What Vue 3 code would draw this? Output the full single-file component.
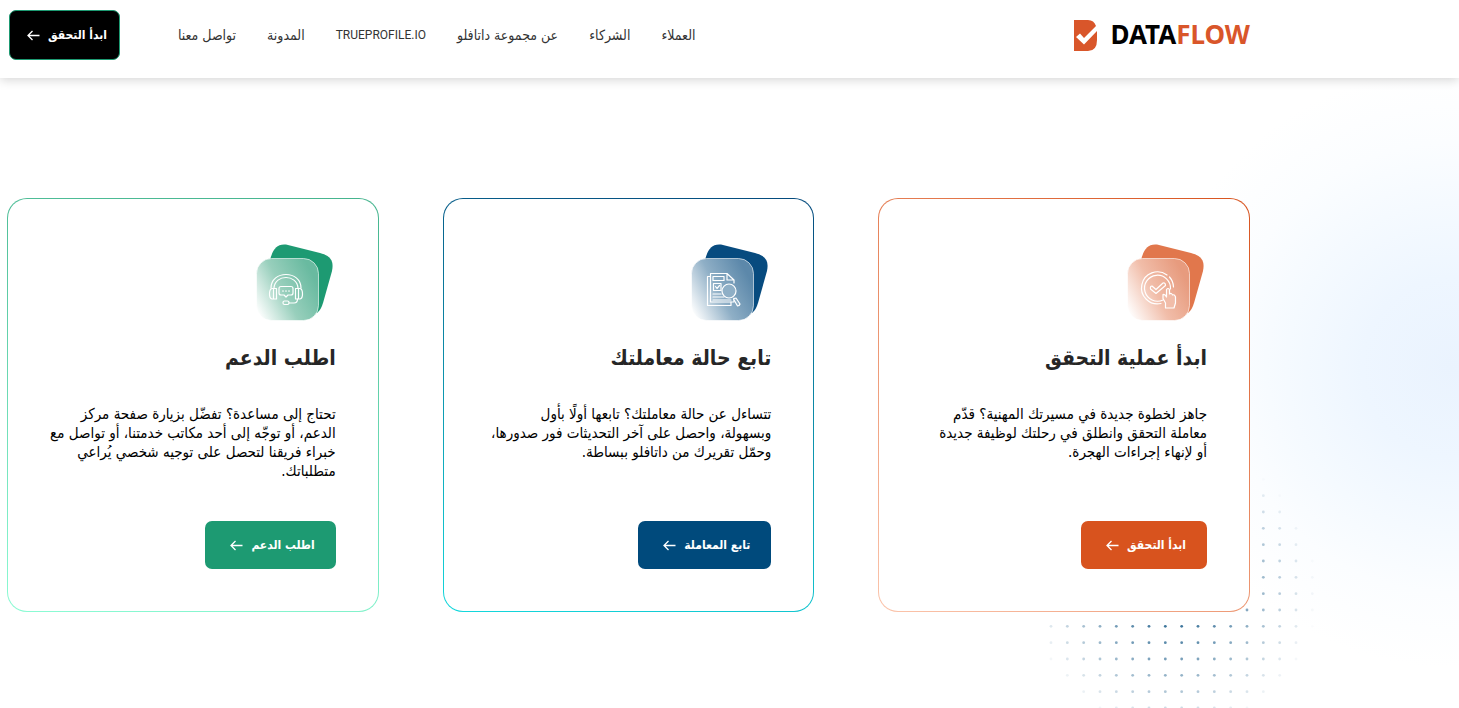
<script setup>
const navItems = [
  { text: 'العملاء' },
  { text: 'الشركاء' },
  { text: 'عن مجموعة داتافلو' },
  { text: 'TRUEPROFILE.IO', latin: true },
  { text: 'المدونة' },
  { text: 'تواصل معنا' },
]

const cards = [
  {
    id: 'verify',
    title: 'ابدأ عملية التحقق',
    lines: [
      'جاهز لخطوة جديدة في مسيرتك المهنية؟ قدّم',
      'معاملة التحقق وانطلق في رحلتك لوظيفة جديدة',
      'أو لإنهاء إجراءات الهجرة.',
    ],
    action: 'ابدأ التحقق',
    back: '#e1774c',
    glass: ['#e79b7e', '#f1bda9', '#ffffff'],
  },
  {
    id: 'track',
    title: 'تابع حالة معاملتك',
    lines: [
      'تتساءل عن حالة معاملتك؟ تابعها أولًا بأول',
      'وبسهولة، واحصل على آخر التحديثات فور صدورها،',
      'وحمّل تقريرك من داتافلو ببساطة.',
    ],
    action: 'تابع المعاملة',
    back: '#074b7f',
    glass: ['#5c88aa', '#8fafc6', '#ffffff'],
  },
  {
    id: 'support',
    title: 'اطلب الدعم',
    lines: [
      'تحتاج إلى مساعدة؟ تفضّل بزيارة صفحة مركز',
      'الدعم، أو توجّه إلى أحد مكاتب خدمتنا، أو تواصل مع',
      'خبراء فريقنا لتحصل على توجيه شخصي يُراعي',
      'متطلباتك.',
    ],
    action: 'اطلب الدعم',
    back: '#1d9a72',
    glass: ['#69baa0', '#98cfbc', '#ffffff'],
  },
]

const step = 49 / 3
const dots = []
for (let row = 0; row < 17; row++) {
  for (let col = 0; col < 17; col++) {
    const x = 2 + col * step
    const y = 2 + row * step
    const fade = 1 - Math.hypot(x - 124, y - 130) / 146
    if (fade > 0) dots.push({ x, y, fade })
  }
}
</script>

<template>
  <div class="page" dir="rtl" lang="ar">
    <header class="bar">
      <a class="logo" href="#" dir="ltr" aria-label="DATAFLOW">
        <svg class="mark" viewBox="0 0 23 31" aria-hidden="true">
          <path d="M0 0H14Q20 0 22 6L10 18L6 13.5L2 17L10 24.5L23 11V20Q23 31 14 31H0Z" fill="#d9562a" />
        </svg>
        <span class="word">DATA<span class="accent">FLOW</span></span>
      </a>
      <nav class="nav">
        <a v-for="item in navItems" :key="item.text" href="#" :class="{ latin: item.latin }">{{ item.text }}</a>
      </nav>
      <button class="start" type="button">
        ابدأ التحقق
        <svg class="arrow" viewBox="0 0 13 11" aria-hidden="true"><path d="M12.5 5.5H1M5.5 1L1 5.5L5.5 10" /></svg>
      </button>
    </header>

    <main class="main">
      <div class="glow"></div>
      <svg class="dots" viewBox="0 0 270 270" aria-hidden="true">
        <circle v-for="(d, i) in dots" :key="i" :cx="d.x" :cy="d.y" r="1.4" :opacity="d.fade" fill="#004a7c" />
      </svg>

      <section class="cards">
        <article v-for="card in cards" :key="card.id" class="card" :class="card.id">
          <svg class="icon" viewBox="0 0 80 80" aria-hidden="true">
            <defs>
              <linearGradient :id="'glass-' + card.id" x1="0.95" y1="0.35" x2="0" y2="0.85">
                <stop offset="0" :stop-color="card.glass[0]" />
                <stop offset="0.5" :stop-color="card.glass[1]" />
                <stop offset="1" :stop-color="card.glass[2]" />
              </linearGradient>
            </defs>
            <path d="M14 17C17 6 21 0 32 2L64 10C75 13 78 18 76 28L67 60Q65 67 61 70L20 60Z" :fill="card.back" />
            <rect x="0.5" y="15.5" width="62" height="62" rx="15" :fill="`url(#glass-${card.id})`" stroke="#fff" stroke-opacity="0.6" />
            <g v-if="card.id === 'verify'" class="line">
              <path d="M40 32A16 16 0 1 0 34 60.5" />
              <path d="M42.5 34A16 16 0 0 1 46.5 44" />
              <path d="M36 57A13 13 0 1 1 43.5 46" />
              <path d="M25 43L29 46.5L36 40Q38.5 39.5 38.5 42.5L29 50.5L23.5 46Q23 43 25 43Z" />
              <path :fill="card.glass[1]" d="M38.5 65V60L36 55.5V51.5Q38 51 39.5 54V46.5Q41 44.5 42.5 46.5V51Q44.5 49.5 45.5 52Q47.5 51 48.5 54V60L47 65Z" />
            </g>
            <g v-else-if="card.id === 'track'" class="line">
              <path d="M19.5 33.5H16.5V62.5H40V59" />
              <path d="M43 40V37L36 30.5H19.5V59H43V55M36 30.5V37H43" />
              <path d="M22 33.5H33V37.5H22ZM22.5 40.5H30V47.5H22.5ZM24.5 43.5L26 45.5L28.5 42.5" />
              <path d="M22 51H30M22 54H33M22 57H40" />
              <circle cx="38" cy="48" r="7" :fill="card.glass[1]" />
              <path :fill="card.glass[1]" d="M42.5 56L45 55L49 61Q48.5 63 46.5 63Z" />
            </g>
            <g v-else class="line">
              <path d="M15 45C15 27 45 27 45 45M18 45C19 31 41 31 42 45" />
              <path d="M20.5 45.5H16Q13.5 46 13.5 51Q13.5 55.5 16 56H20.5ZM17.5 45.5V56" />
              <path d="M39.5 45.5H44Q46.5 46 46.5 51Q46.5 55.5 44 56H39.5ZM42.5 45.5V56" />
              <path d="M25 43.5H35Q37 43.5 37 45.5V50Q37 52 35 52H32L30 54L28 52H25Q23 52 23 50V45.5Q23 43.5 25 43.5Z" />
              <path d="M26.5 48H27.5M29.5 48H30.5M32.5 48H33.5" />
              <rect x="27" y="58" width="6" height="3.5" rx="1.5" />
              <path d="M33 60H38Q41.5 60 41.5 56" />
            </g>
          </svg>
          <h2>{{ card.title }}</h2>
          <p>
            <template v-for="(line, i) in card.lines" :key="i"><br v-if="i" />{{ line }}</template>
          </p>
          <button class="action" type="button">
            {{ card.action }}
            <svg class="arrow" viewBox="0 0 13 11" aria-hidden="true"><path d="M12.5 5.5H1M5.5 1L1 5.5L5.5 10" /></svg>
          </button>
        </article>
      </section>
    </main>
  </div>
</template>

<style>
body {
  margin: 0;
  background: #fff;
}
</style>

<style scoped>
.page {
  min-height: 100vh;
  display: flex;
  flex-direction: column;
  overflow: hidden;
  font-family: "DejaVu Sans Condensed", "DejaVu Sans", sans-serif;
  color: #000;
}

.bar {
  position: relative;
  z-index: 1;
  display: flex;
  align-items: center;
  box-sizing: border-box;
  min-height: 78px;
  padding: 0 209px 8px 9px;
  background: #fff;
  box-shadow: 0 2px 10px rgba(0, 0, 0, 0.17);
}

.logo {
  display: flex;
  align-items: center;
  gap: 13px;
  margin-left: auto;
  text-decoration: none;
}

.mark {
  width: 23px;
  height: 31px;
}

.word {
  padding-bottom: 2px;
  font: 700 26px/30px "Noto Sans", sans-serif;
  color: #000;
}

.accent {
  color: #d9562a;
}

.nav {
  display: flex;
  align-items: center;
  gap: 31px;
  margin-left: 58px;
  white-space: nowrap;
}

.nav a {
  font-size: 14px;
  line-height: 20px;
  color: #333;
  text-decoration: none;
}

.nav .latin {
  font-family: Roboto, sans-serif;
  font-size: 12px;
}

button {
  display: inline-flex;
  align-items: center;
  gap: 8px;
  border: 0;
  border-radius: 7px;
  color: #fff;
  font-family: inherit;
  font-size: 12px;
  font-weight: 700;
  line-height: 20px;
  white-space: nowrap;
  cursor: pointer;
}

.start {
  height: 50px;
  padding: 0 12px 0 17px;
  border: 1px solid #1d9a72;
  background: #000;
}

.arrow {
  width: 13px;
  height: 11px;
  fill: none;
  stroke: currentColor;
  stroke-width: 1.3;
}

.main {
  position: relative;
  flex: 1;
  padding: 120px 209px 96px 7px;
}

.glow {
  position: absolute;
  top: 0;
  right: 0;
  bottom: 0;
  width: 360px;
  background: radial-gradient(circle at 98% 46%, #eaf3fe 0, #eef6ff 90px, #f5faff 165px, #fbfdff 225px, #fff 300px);
}

.dots {
  position: absolute;
  top: 383px;
  right: 140px;
  width: 270px;
  height: 270px;
}

.cards {
  position: relative;
  display: grid;
  grid-template-columns: repeat(3, minmax(0, 1fr));
  gap: 64px;
}

.card {
  display: flex;
  flex-direction: column;
  align-items: flex-start;
  box-sizing: border-box;
  min-height: 414px;
  padding: 44px 42px 42px;
  border: 1px solid transparent;
  border-radius: 20px;
}

.verify {
  background: linear-gradient(#fff, #fff) padding-box, linear-gradient(215deg, #d8531e, #fbc5ac) border-box;
}

.track {
  background: linear-gradient(#fff, #fff) padding-box, linear-gradient(190deg, #054a7d, #14d8dc) border-box;
}

.support {
  background: linear-gradient(#fff, #fff) padding-box, linear-gradient(190deg, #45b48e, #8cfbd4) border-box;
}

.icon {
  width: 80px;
  height: 80px;
}

.line {
  fill: none;
  stroke: #fff;
  stroke-width: 1.2;
  stroke-linecap: round;
  stroke-linejoin: round;
}

h2 {
  margin: 20px 0 0;
  font-size: 21px;
  font-weight: 700;
  line-height: 30px;
  color: #262626;
  white-space: nowrap;
}

p {
  margin: 32px 0 0;
  font-size: 15px;
  line-height: 19px;
  white-space: nowrap;
}

.action {
  height: 48px;
  margin-top: auto;
  padding: 0 21px 0 25px;
}

.verify .action {
  background: #d8531e;
}

.track .action {
  background: #004a7c;
}

.support .action {
  background: #1d9a72;
}
</style>
